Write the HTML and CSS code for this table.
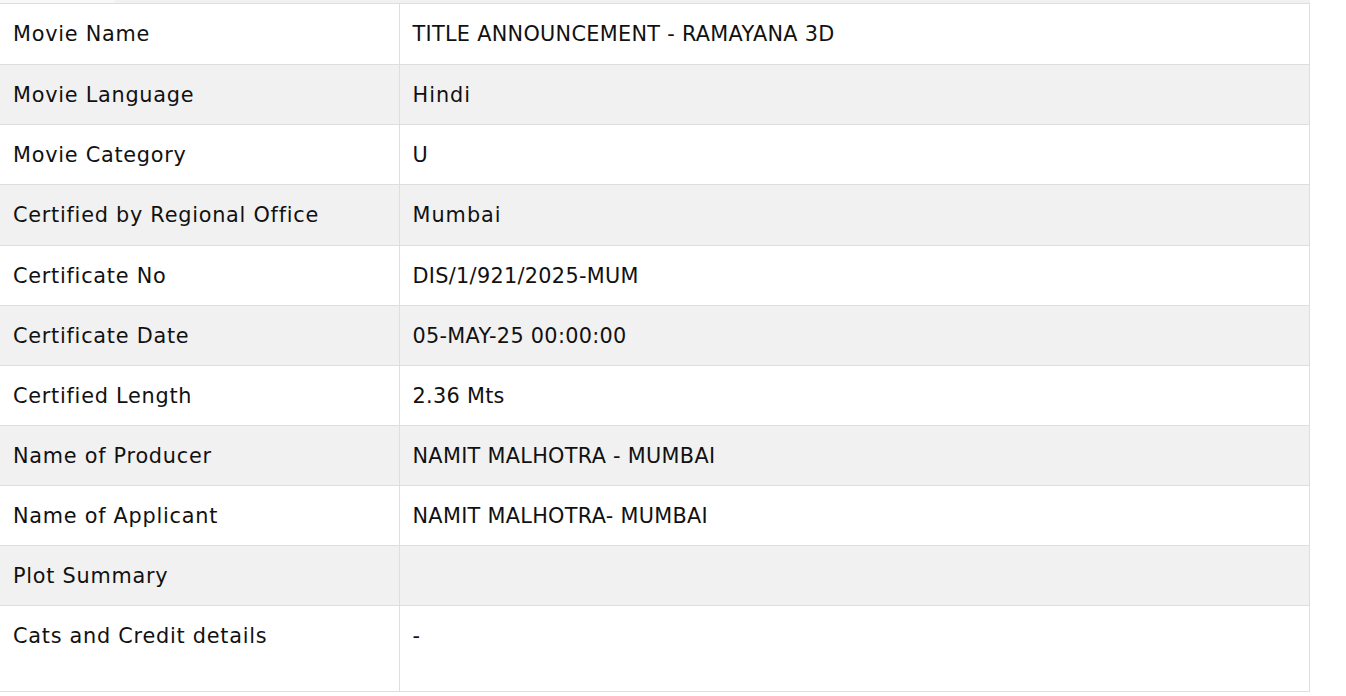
FILE: index.html
```html
<!DOCTYPE html>
<html lang="en">
<head>
<meta charset="utf-8">
<title>Certificate Details</title>
<link rel="stylesheet" href="styles.css">
</head>
<body>
<div class="page">
  <div class="prev-row"><span class="mark"></span></div>
  <table class="details">
    <tbody>
      <tr class="tall"><td class="label">Movie Name</td><td class="value">TITLE ANNOUNCEMENT - RAMAYANA 3D</td></tr>
      <tr><td class="label">Movie Language</td><td class="value mixed">Hindi</td></tr>
      <tr><td class="label">Movie Category</td><td class="value">U</td></tr>
      <tr class="tall"><td class="label">Certified by Regional Office</td><td class="value mixed">Mumbai</td></tr>
      <tr><td class="label">Certificate No</td><td class="value">DIS/1/921/2025-MUM</td></tr>
      <tr><td class="label">Certificate Date</td><td class="value">05-MAY-25 00:00:00</td></tr>
      <tr><td class="label">Certified Length</td><td class="value">2.36 Mts</td></tr>
      <tr><td class="label">Name of Producer</td><td class="value">NAMIT MALHOTRA - MUMBAI</td></tr>
      <tr><td class="label">Name of Applicant</td><td class="value">NAMIT MALHOTRA- MUMBAI</td></tr>
      <tr><td class="label">Plot Summary</td><td class="value"></td></tr>
      <tr class="last"><td class="label">Cats and Credit details</td><td class="value">-</td></tr>
    </tbody>
  </table>
</div>
</body>
</html>
```
FILE: styles.css
```css
html, body {
  margin: 0;
  padding: 0;
  background: #ffffff;
}
body {
  font-family: "DejaVu Sans", "Liberation Sans", sans-serif;
  color: #111111;
}
.page {
  width: 1310px;
}
.prev-row {
  position: relative;
  height: 3px;
  background: #f1f1f1;
}
.mark {
  position: absolute;
  left: 0;
  top: 0;
  width: 115px;
  height: 3px;
  background: rgba(255, 255, 255, 0.5);
}
.details {
  width: 1310px;
  border-collapse: collapse;
  border-top: 1px solid #dedede;
  border-right: 1px solid #dedede;
  border-bottom: 1px solid #dedede;
}
.details td {
  height: 60px;
  padding: 0 13px;
  border-bottom: 1px solid #dedede;
  font-size: 20.8px;
  letter-spacing: 0.3px;
  line-height: 24px;
  vertical-align: middle;
  box-sizing: border-box;
}
.details tr.tall td {
  height: 61px;
}
.details td.label {
  width: 399px;
  border-right: 1px solid #dedede;
  letter-spacing: 0.75px;
}
.details td.mixed {
  letter-spacing: 1px;
}
.details tr:nth-child(even) td {
  background: #f1f1f1;
}
.details tr.last td {
  height: 86px;
  vertical-align: top;
  padding-top: 18px;
}
```
